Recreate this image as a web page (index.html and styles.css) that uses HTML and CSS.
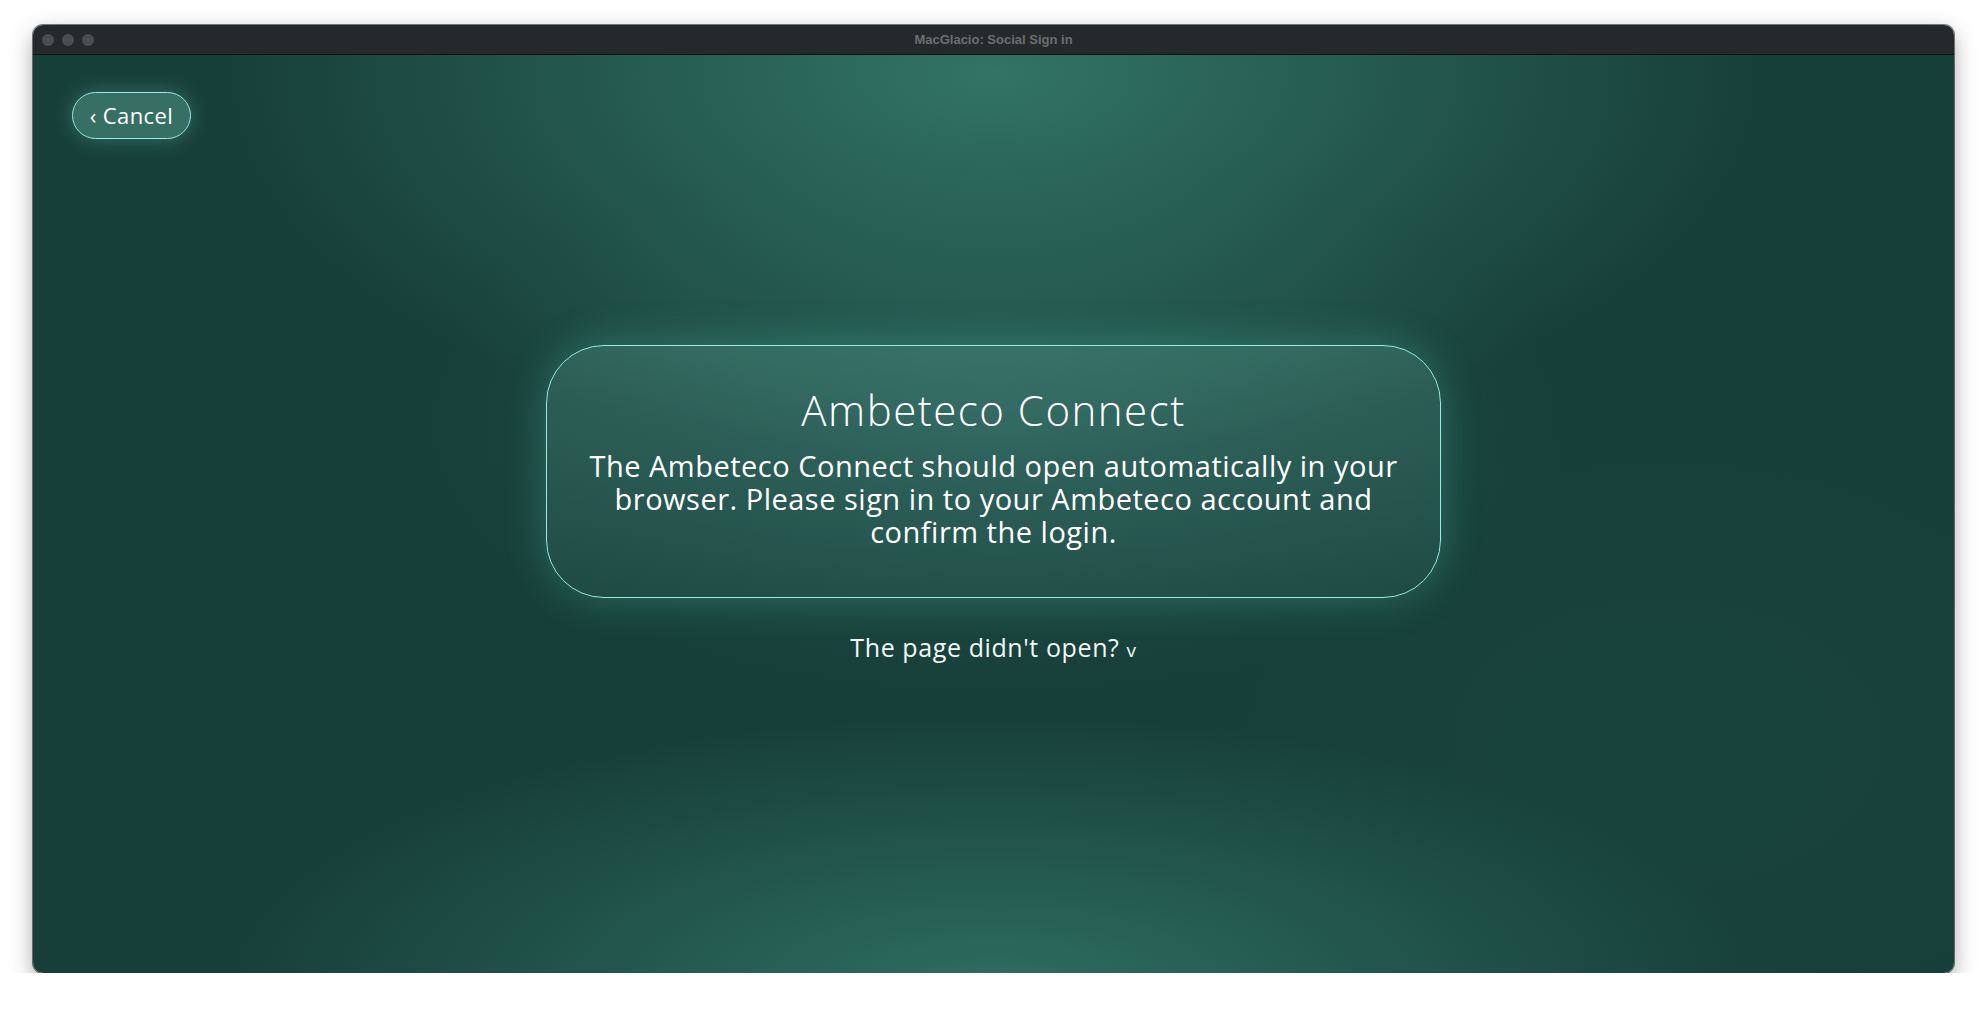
FILE: index.html
```html
<!DOCTYPE html>
<html lang="en">
<head>
  <meta charset="UTF-8">
  <title>MacGlacio: Social Sign in</title>
  <link rel="stylesheet" href="styles.css">
</head>
<body>
  <div class="window">
    <div class="titlebar">
      <div class="lights">
        <span></span><span></span><span></span>
      </div>
      <div class="title">MacGlacio: Social Sign in</div>
    </div>

    <div class="content">
      <button class="cancel">&lsaquo; Cancel</button>

      <div class="card">
        <h1>Ambeteco Connect</h1>
        <p>The Ambeteco Connect should open automatically in your browser. Please sign in to your Ambeteco account and confirm the login.</p>
      </div>

      <div class="help">The page didn't open? <span class="caret">v</span></div>
    </div>
  </div>
</body>
</html>
```

FILE: styles.css
```css
body {
  margin: 0;
  background: #ffffff;
  font-family: "Open Sans", "Noto Sans", sans-serif;
}

.window {
  margin: 25px 34px 0 33px;
  height: 948px;
  border-radius: 10px;
  overflow: hidden;
  display: flex;
  flex-direction: column;
  box-shadow: 0 8px 22px rgba(0, 0, 0, 0.35), 0 0 0 1px rgba(0, 0, 0, 0.5);
}

.titlebar {
  height: 29px;
  background: #25292b;
  border-bottom: 1px solid #111;
  display: flex;
  align-items: center;
  position: relative;
  flex-shrink: 0;
}

.lights {
  display: flex;
  gap: 8px;
  padding-left: 9px;
}

.lights span {
  width: 12px;
  height: 12px;
  border-radius: 50%;
  background: #4b4e50;
}

.title {
  position: absolute;
  left: 0;
  right: 0;
  text-align: center;
  font-family: "Liberation Sans", Arial, sans-serif;
  font-weight: bold;
  font-size: 13px;
  color: #6b6f71;
}

.content {
  flex: 1;
  display: flex;
  flex-direction: column;
  align-items: center;
  padding: 37px 39px 0 39px;
  color: #ffffff;
  background:
    radial-gradient(ellipse 40% 42% at 50% 2%, rgba(55, 125, 110, 0.85), rgba(55, 125, 110, 0) 100%),
    radial-gradient(ellipse 40% 30% at 50% 102%, rgba(48, 115, 100, 0.9), rgba(48, 115, 100, 0) 100%),
    radial-gradient(ellipse 30% 30% at 50% 40%, rgba(40, 95, 88, 0.6), rgba(40, 95, 88, 0) 100%),
    radial-gradient(ellipse 25% 35% at 85% 75%, rgba(24, 70, 62, 0.6), rgba(24, 70, 62, 0) 100%),
    #173f39;
}

.cancel {
  align-self: flex-start;
  height: 47px;
  width: 119px;
  padding: 0 0 2px 0;
  border-radius: 24px;
  border: 1px solid #95ece2;
  background: rgba(115, 200, 182, 0.35);
  color: #ffffff;
  font-family: inherit;
  font-size: 22px;
  letter-spacing: 0.4px;
  box-shadow: 0 0 20px rgba(120, 230, 215, 0.3);
  cursor: pointer;
}

.card {
  margin-top: 206px;
  width: 895px;
  box-sizing: border-box;
  height: 253px;
  padding: 39px 20px 0 20px;
  border: 1px solid #95ece2;
  border-radius: 58px;
  background: linear-gradient(180deg, rgba(120, 200, 185, 0.22), rgba(120, 200, 185, 0.08));
  box-shadow: 0 0 40px rgba(100, 220, 200, 0.28);
  text-align: center;
}

.card h1 {
  margin: 0;
  font-weight: 300;
  font-size: 42px;
  line-height: 50px;
  letter-spacing: 1.5px;
}

.card p {
  margin: 14px 0 0 0;
  font-size: 29px;
  line-height: 33px;
  letter-spacing: 0.5px;
  font-weight: 400;
}

.help {
  margin-top: 32px;
  font-size: 25px;
  letter-spacing: 0.6px;
  color: #f2f8f6;
}

.caret {
  font-size: 19px;
}
```
